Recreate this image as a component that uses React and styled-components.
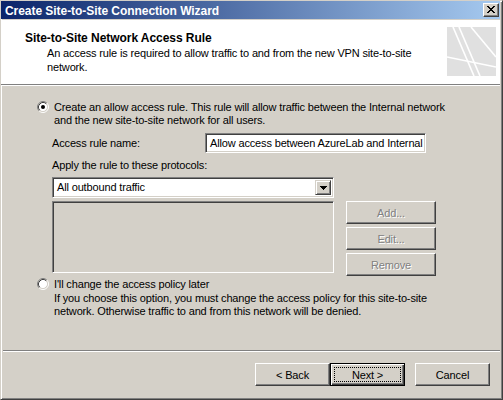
import React from "react";
import styled, { createGlobalStyle } from "styled-components";

const GlobalStyle = createGlobalStyle`
  html, body { margin: 0; padding: 0; background: #d4d0c8; }
  body { font-family: "Liberation Sans", Arial, sans-serif; }
`;

const FACE = "#d4d0c8";

const Window = styled.div`
  width: 503px;
  height: 400px;
  box-sizing: border-box;
  background: ${FACE};
  border: 1px solid;
  border-color: ${FACE} #404040 #404040 ${FACE};
  box-shadow: inset 1px 1px #fff, inset -1px -1px #808080;
  padding: 0 2px 0 0;
  display: flex;
  flex-direction: column;
  font-family: "Liberation Sans", Arial, sans-serif;
  font-size: 11px;
  letter-spacing: -0.15px;
  color: #000;
  overflow: hidden;
`;

const TitleBar = styled.div`
  height: 18px;
  flex: none;
  display: flex;
  align-items: center;
  justify-content: space-between;
  padding: 0 1px 0 4px;
  background: linear-gradient(to right, #0a246a, #a6caf0);
`;

const TitleText = styled.span`
  color: #fff;
  font-weight: bold;
  font-size: 12px;
  letter-spacing: -0.05px;
  padding-top: 2px;
  white-space: nowrap;
`;

const CloseButton = styled.div`
  width: 16px;
  height: 14px;
  box-sizing: border-box;
  background: ${FACE};
  border: 1px solid;
  border-color: #fff #404040 #404040 #fff;
  box-shadow: inset -1px -1px #808080;
  display: flex;
  align-items: center;
  justify-content: center;
  padding: 0 1px 1px 0;
`;

const Header = styled.div`
  flex: none;
  height: 64px;
  margin-top: 1px;
  background: #fff;
  display: flex;
  justify-content: space-between;
  align-items: flex-start;
`;

const HeaderText = styled.div`
  padding: 12px 0 0 24px;
  white-space: nowrap;
`;

const HeaderTitle = styled.div`
  font-weight: bold;
  font-size: 12px;
  letter-spacing: -0.05px;
  line-height: 13px;
`;

const HeaderSub = styled.div`
  padding-left: 22px;
  line-height: 14px;
  margin-top: 1px;
`;

const HeaderArt = styled.svg`
  margin: 7px 4px 0 0;
  flex: none;
`;

const Etched = styled.div`
  flex: none;
  height: 2px;
  box-sizing: border-box;
  border-top: 1px solid #808080;
  border-bottom: 1px solid #fff;
  margin-left: ${(p) => p.$indent || 0}px;
`;

const Body = styled.div`
  flex: 1;
  padding: 15px 0 0 36px;
  display: flex;
  flex-direction: column;
  align-items: flex-start;
`;

const RadioRow = styled.div`
  display: flex;
  align-items: flex-start;
  gap: 5px;
  margin-top: ${(p) => p.$top || 0}px;
  line-height: 13px;
  white-space: nowrap;
`;

const RadioIcon = styled.svg`
  flex: none;
`;

const Indent = styled.div`
  margin-left: 15px;
  display: flex;
  flex-direction: column;
  align-items: flex-start;
`;

const FieldRow = styled.div`
  display: flex;
  align-items: center;
  margin-top: 6px;
  height: 20px;
`;

const FieldLabel = styled.span`
  width: 153px;
  white-space: nowrap;
`;

const TextBox = styled.div`
  width: 221px;
  height: 20px;
  box-sizing: border-box;
  background: #fff;
  border: 1px solid;
  border-color: #808080 #fff #fff #808080;
  box-shadow: inset 1px 1px #404040, inset -1px -1px ${FACE};
  padding: 0 0 0 4px;
  line-height: 18px;
  white-space: nowrap;
  overflow: hidden;
`;

const PlainLabel = styled.div`
  margin-top: 6px;
  line-height: 13px;
  white-space: nowrap;
`;

const Combo = styled.div`
  margin-top: 5px;
  width: 282px;
  height: 21px;
  box-sizing: border-box;
  background: #fff;
  border: 1px solid;
  border-color: #808080 #fff #fff #808080;
  box-shadow: inset 1px 1px #404040, inset -1px -1px ${FACE};
  padding: 2px;
  display: flex;
  align-items: stretch;
`;

const ComboValue = styled.div`
  flex: 1;
  padding-left: 2px;
  line-height: 15px;
  white-space: nowrap;
`;

const ComboArrow = styled.div`
  width: 16px;
  box-sizing: border-box;
  background: ${FACE};
  border: 1px solid;
  border-color: ${FACE} #404040 #404040 ${FACE};
  box-shadow: inset 1px 1px #fff, inset -1px -1px #808080;
  display: flex;
  align-items: center;
  justify-content: center;
`;

const ListRow = styled.div`
  display: flex;
  gap: 12px;
  margin-top: 3px;
  align-items: flex-start;
`;

const ListBox = styled.div`
  width: 282px;
  height: 72px;
  box-sizing: border-box;
  background: ${FACE};
  border: 1px solid;
  border-color: #808080 #fff #fff #808080;
  box-shadow: inset 1px 1px #404040, inset -1px -1px ${FACE};
`;

const ButtonColumn = styled.div`
  display: flex;
  flex-direction: column;
  gap: 3px;
`;

const Button = styled.div`
  width: ${(p) => p.$w || 75}px;
  height: 23px;
  box-sizing: border-box;
  position: relative;
  background: ${FACE};
  border: 1px solid;
  border-color: ${(p) => (p.$default ? "#000" : "#fff #404040 #404040 #fff")};
  box-shadow: ${(p) =>
    p.$default
      ? "inset 1px 1px #fff, inset -1px -1px #404040, inset -2px -2px #808080"
      : `inset -1px -1px #808080, inset 1px 1px ${FACE}`};
  display: flex;
  align-items: center;
  justify-content: center;
  white-space: nowrap;
  color: ${(p) => (p.$disabled ? "#808080" : "#000")};
  text-shadow: ${(p) => (p.$disabled ? "1px 1px #fff" : "none")};
  margin-left: ${(p) => p.$ml || 0}px;
`;

const FocusRing = styled.span`
  position: absolute;
  inset: 3px;
  border: 1px dotted #000;
  pointer-events: none;
`;

const Description = styled.div`
  margin: 1px 0 0 17px;
  line-height: 13px;
  white-space: nowrap;
`;

const Footer = styled.div`
  flex: none;
  height: 49px;
  display: flex;
  flex-direction: column;
`;

const FooterButtons = styled.div`
  display: flex;
  justify-content: flex-end;
  padding: 11px 10px 0 0;
`;

function Radio({ checked }) {
  return (
    <RadioIcon width="12" height="12" viewBox="0 0 12 12">
      <circle cx="6" cy="6" r="4.5" fill="#fff" />
      <path d="M2.11 9.89 A5.5 5.5 0 0 1 9.89 2.11" fill="none" stroke="#808080" strokeWidth="1" />
      <path d="M9.89 2.11 A5.5 5.5 0 0 1 2.11 9.89" fill="none" stroke="#fff" strokeWidth="1" />
      <path d="M2.82 9.18 A4.5 4.5 0 0 1 9.18 2.82" fill="none" stroke="#404040" strokeWidth="1" />
      <path d="M9.18 2.82 A4.5 4.5 0 0 1 2.82 9.18" fill="none" stroke="#d4d0c8" strokeWidth="1" />
      {checked && <circle cx="6" cy="6" r="2" fill="#000" />}
    </RadioIcon>
  );
}

function CloseGlyph() {
  return (
    <svg width="8" height="7" viewBox="0 0 8 7" shapeRendering="crispEdges">
      <path
        d="M0 0h2v1h-2z M6 0h2v1h-2z M1 1h2v1h-2z M5 1h2v1h-2z M2 2h4v1h-4z M3 3h2v1h-2z M2 4h4v1h-4z M1 5h2v1h-2z M5 5h2v1h-2z M0 6h2v1h-2z M6 6h2v1h-2z"
        fill="#000"
      />
    </svg>
  );
}

function DropArrow() {
  return (
    <svg width="7" height="4" viewBox="0 0 7 4" shapeRendering="crispEdges">
      <path d="M0 0h7v1h-7z M1 1h5v1h-5z M2 2h3v1h-3z M3 3h1v1h-1z" fill="#000" />
    </svg>
  );
}

function WizardArt() {
  return (
    <HeaderArt width="49" height="49" viewBox="0 0 49 49">
      <rect width="49" height="49" fill="#e0e0e0" />
      <g stroke="#fff" strokeWidth="1.6" fill="none">
        <line x1="6" y1="0" x2="27" y2="49" />
        <line x1="12" y1="0" x2="33" y2="49" />
        <line x1="24" y1="0" x2="49" y2="30" />
        <line x1="0" y1="30" x2="49" y2="40" />
      </g>
    </HeaderArt>
  );
}

export default function App() {
  return (
    <>
      <GlobalStyle />
      <Window>
        <TitleBar>
          <TitleText>Create Site-to-Site Connection Wizard</TitleText>
          <CloseButton>
            <CloseGlyph />
          </CloseButton>
        </TitleBar>
        <Header>
          <HeaderText>
            <HeaderTitle>Site-to-Site Network Access Rule</HeaderTitle>
            <HeaderSub>
              An access rule is required to allow traffic to and from the new VPN site-to-site
              <br />
              network.
            </HeaderSub>
          </HeaderText>
          <WizardArt />
        </Header>
        <Etched />
        <Body>
          <RadioRow>
            <Radio checked />
            <span>
              Create an allow access rule. This rule will allow traffic between the Internal network
              <br />
              and the new site-to-site network for all users.
            </span>
          </RadioRow>
          <Indent>
            <FieldRow>
              <FieldLabel>Access rule name:</FieldLabel>
              <TextBox>Allow access between AzureLab and Internal</TextBox>
            </FieldRow>
            <PlainLabel>Apply the rule to these protocols:</PlainLabel>
            <Combo>
              <ComboValue>All outbound traffic</ComboValue>
              <ComboArrow>
                <DropArrow />
              </ComboArrow>
            </Combo>
            <ListRow>
              <ListBox />
              <ButtonColumn>
                <Button $w={90} $disabled>Add...</Button>
                <Button $w={90} $disabled>Edit...</Button>
                <Button $w={90} $disabled>Remove</Button>
              </ButtonColumn>
            </ListRow>
          </Indent>
          <RadioRow $top={2}>
            <Radio />
            <span>I'll change the access policy later</span>
          </RadioRow>
          <Description>
            If you choose this option, you must change the access policy for this site-to-site
            <br />
            network. Otherwise traffic to and from this network will be denied.
          </Description>
        </Body>
        <Footer>
          <Etched $indent={2} />
          <FooterButtons>
            <Button>&lt; Back</Button>
            <Button $default>
              Next &gt;
              <FocusRing />
            </Button>
            <Button $ml={10}>Cancel</Button>
          </FooterButtons>
        </Footer>
      </Window>
    </>
  );
}
